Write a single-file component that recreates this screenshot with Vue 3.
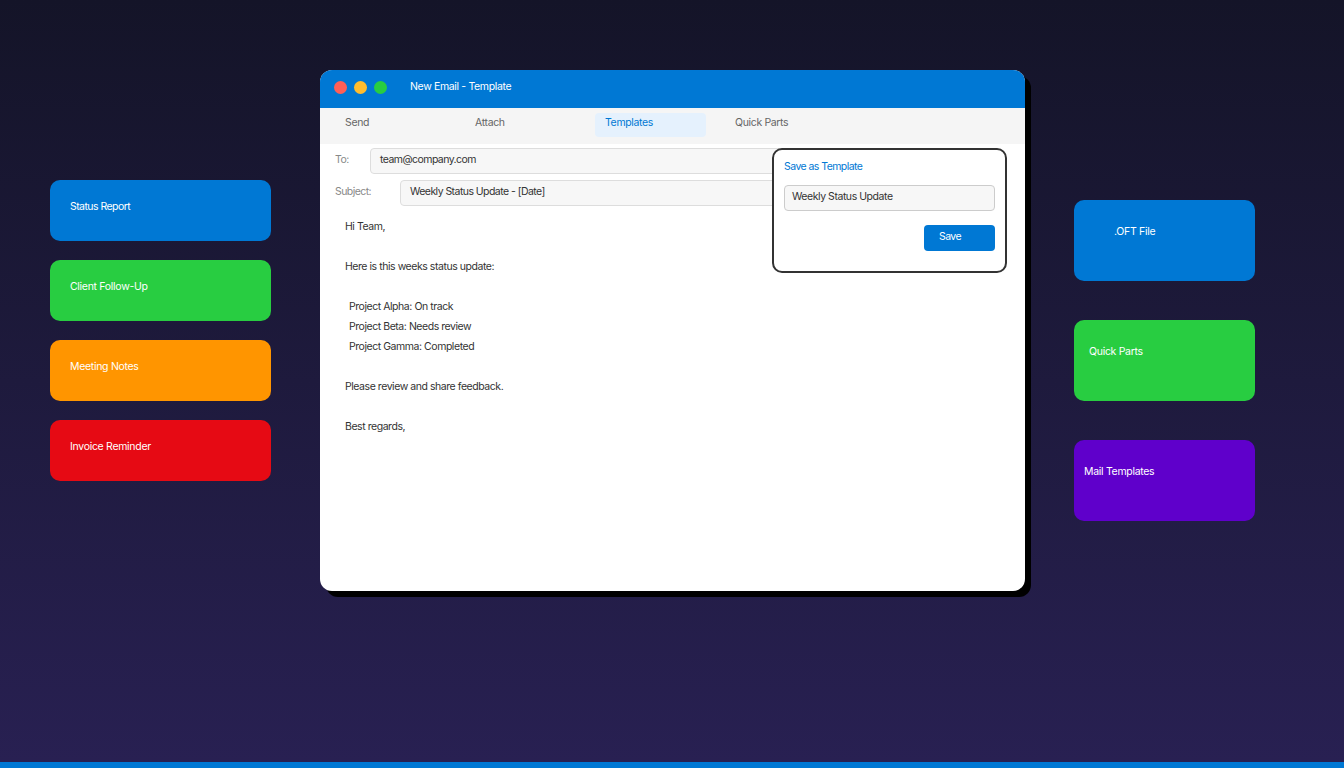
<template>
  <div class="page">
    <div class="left-col">
      <div v-for="card in leftCards" :key="card.label" class="card left-card" :style="{ background: card.color, paddingLeft: card.pad + 'px' }">
        {{ card.label }}
      </div>
    </div>

    <div class="window">
      <div class="titlebar">
        <span class="dot red"></span>
        <span class="dot yellow"></span>
        <span class="dot green"></span>
        <span class="title">New Email - Template</span>
      </div>
      <div class="toolbar">
        <div v-for="tab in tabs" :key="tab" class="tab" :class="{ active: tab === 'Templates' }">{{ tab }}</div>
      </div>
      <div class="content">
        <div class="field">
          <span class="field-label to-label">To:</span>
          <div class="field-input">team@company.com</div>
        </div>
        <div class="field">
          <span class="field-label subject-label">Subject:</span>
          <div class="field-input">Weekly Status Update - [Date]</div>
        </div>
        <div class="body">
          <div v-for="(line, i) in lines" :key="i" class="line" :class="{ indent: line.startsWith('Project') }">{{ line }}</div>
        </div>

        <div class="popup">
          <div class="popup-title">Save as Template</div>
          <div class="popup-input">Weekly Status Update</div>
          <div class="popup-actions">
            <div class="save">Save</div>
          </div>
        </div>
      </div>
    </div>

    <div class="right-col">
      <div v-for="card in rightCards" :key="card.label" class="card right-card" :style="{ background: card.color, paddingLeft: card.pad + 'px' }">
        {{ card.label }}
      </div>
    </div>
  </div>
</template>

<script setup>
const leftCards = [
  { label: 'Status Report', color: '#0078d4', pad: 20 },
  { label: 'Client Follow-Up', color: '#28cd41', pad: 20 },
  { label: 'Meeting Notes', color: '#ff9500', pad: 20 },
  { label: 'Invoice Reminder', color: '#e60a14', pad: 20 },
]

const rightCards = [
  { label: '.OFT File', color: '#0078d4', pad: 40 },
  { label: 'Quick Parts', color: '#28cd41', pad: 15 },
  { label: 'Mail Templates', color: '#5f00cb', pad: 10 },
]

const tabs = ['Send', 'Attach', 'Templates', 'Quick Parts']

const lines = [
  'Hi Team,',
  '',
  'Here is this weeks status update:',
  '',
  'Project Alpha: On track',
  'Project Beta: Needs review',
  'Project Gamma: Completed',
  '',
  'Please review and share feedback.',
  '',
  'Best regards,',
]
</script>

<style>
html,
body {
  margin: 0;
  background: #141428;
}
</style>

<style scoped>
.page {
  display: flex;
  align-items: flex-start;
  box-sizing: border-box;
  width: 1344px;
  height: 768px;
  padding-left: 50px;
  border-bottom: 6px solid #0078d4;
  background: linear-gradient(180deg, #141428 0%, #282052 100%);
  font-family: Inter, "Liberation Sans", sans-serif;
  font-size: 10.5px;
  overflow: hidden;
}

.left-col {
  display: flex;
  flex-direction: column;
  gap: 19px;
  width: 221px;
  margin-top: 180px;
}

.right-col {
  display: flex;
  flex-direction: column;
  gap: 39px;
  width: 181px;
  margin-top: 200px;
  margin-left: 49px;
}

.card {
  box-sizing: border-box;
  padding-top: 19px;
  border-radius: 10px;
  color: #fff;
  line-height: 16px;
  letter-spacing: -0.3px;
}

.left-card {
  height: 61px;
}

.left-card:first-child {
  letter-spacing: -0.55px;
}

.right-card {
  height: 81px;
  padding-top: 24px;
}

.window {
  width: 705px;
  height: 521px;
  margin-top: 70px;
  margin-left: 49px;
  border-radius: 12px;
  background: #fff;
  box-shadow: 6px 6px 0 #000;
  overflow: hidden;
}

.titlebar {
  display: flex;
  align-items: center;
  box-sizing: border-box;
  height: 38px;
  padding: 0 0 4px 14px;
  background: #0078d4;
}

.dot {
  width: 13px;
  height: 13px;
  margin-right: 7px;
  border-radius: 50%;
}

.red {
  background: #ff5f57;
}

.yellow {
  background: #ffbd2e;
}

.green {
  background: #28cd41;
}

.title {
  margin-left: 16px;
  margin-bottom: 2px;
  color: #fff;
  letter-spacing: -0.35px;
}

.toolbar {
  display: flex;
  gap: 20px;
  box-sizing: border-box;
  height: 36px;
  padding: 5px 15px 0;
  background: #f5f5f5;
}

.tab {
  box-sizing: border-box;
  width: 111px;
  height: 24px;
  margin-right: -1px;
  padding: 3px 10px;
  border-radius: 4px;
  color: #666;
  line-height: 14px;
  letter-spacing: -0.35px;
}

.tab.active {
  background: #e5f1fd;
  color: #0078d4;
}

.content {
  position: relative;
  padding: 4px 0 0 15px;
}

.field {
  display: flex;
  margin-bottom: 6px;
}

.field-label {
  color: #888;
  line-height: 24px;
  letter-spacing: -0.55px;
}

.to-label {
  width: 35px;
}

.subject-label {
  width: 65px;
}

.field-input {
  flex: 1;
  box-sizing: border-box;
  height: 26px;
  margin-right: 25px;
  padding: 3px 9px;
  border: 1px solid #ddd;
  border-radius: 4px;
  background: #f7f7f7;
  color: #333;
  line-height: 16px;
  letter-spacing: -0.55px;
}

.body {
  padding: 5px 0 0 10px;
  color: #333;
  line-height: 20px;
  letter-spacing: -0.45px;
}

.line {
  min-height: 20px;
}

.indent {
  padding-left: 4px;
}

.popup {
  position: absolute;
  top: 4px;
  left: 452px;
  box-sizing: border-box;
  width: 235px;
  height: 125px;
  padding: 10px;
  border: 2px solid #333;
  border-radius: 10px;
  background: #fff;
}

.popup-title {
  color: #0078d4;
  line-height: 14px;
  letter-spacing: -0.55px;
}

.popup-input {
  box-sizing: border-box;
  height: 26px;
  margin-top: 11px;
  padding: 3px 7px;
  border: 1px solid #ccc;
  border-radius: 4px;
  background: #f7f7f7;
  color: #333;
  line-height: 16px;
  letter-spacing: -0.45px;
}

.popup-actions {
  display: flex;
  justify-content: flex-end;
  margin-top: 14px;
}

.save {
  box-sizing: border-box;
  width: 71px;
  height: 26px;
  padding: 4px 15px;
  border-radius: 4px;
  background: #0078d4;
  color: #fff;
  line-height: 16px;
  letter-spacing: -0.6px;
}
</style>
